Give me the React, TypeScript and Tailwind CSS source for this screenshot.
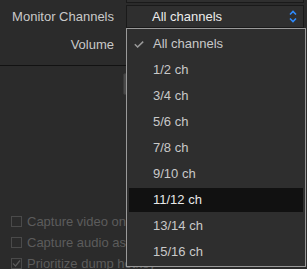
const items = ['All channels', '1/2 ch', '3/4 ch', '5/6 ch', '7/8 ch', '9/10 ch', '11/12 ch', '13/14 ch', '15/16 ch']

function Check({ checked }: { checked?: boolean }) {
  return (
    <span className="w-[11px] h-[11px] border border-[#4a4a4a] flex items-center justify-center shrink-0">
      {checked && (
        <svg width="9" height="9" viewBox="0 0 9 9">
          <path d="M1 4.5 L3.5 7 L8 1.5" stroke="#5a5a5a" strokeWidth="1.2" fill="none" />
        </svg>
      )}
    </span>
  )
}

export default function App() {
  return (
    <div
      className="relative w-[307px] h-[269px] overflow-hidden bg-[#2b2b2b] text-[13px] text-[#c9c9c9]"
      style={{ fontFamily: '"Liberation Sans", Arial, sans-serif' }}
    >
      <div className="flex flex-col h-[66px] border-b border-[#121212] w-[126px]">
        <div className="h-[6px]" />
        <div className="h-[22px] flex items-center justify-end pr-[12px]">Monitor Channels</div>
        <div className="h-[32px] flex items-center justify-end pr-[12px] pt-[2px]">Volume</div>
      </div>

      {/* previous combo bottom edge */}
      <div className="absolute left-[126px] top-[-10px] w-[178px] h-[13px] border border-[#1a1a1a] bg-[#2f2f2f]" />

      {/* combo */}
      <div className="absolute left-[126px] top-[5px] w-[178px] h-[23px] border border-[#1a1a1a] bg-[#2f2f2f] flex items-center pl-[25px] text-[#ececec]">
        All channels
        <svg className="absolute left-[162px] top-[4px]" width="8" height="13" viewBox="0 0 8 13">
          <path d="M1 4.5 L4 1.5 L7 4.5 M1 8.5 L4 11.5 L7 8.5" stroke="#2f8cff" strokeWidth="1.6" fill="none" />
        </svg>
      </div>

      {/* slider handle */}
      <div className="absolute left-[123px] top-[73px] w-[6px] h-[22px] rounded-[2px] bg-[#4a4a4a] border border-[#3a3a3a]" />

      {/* checkboxes */}
      <div className="absolute left-[11px] top-[214px] flex flex-col gap-[6px] text-[#5c5c5c] text-[13px]">
        <div className="flex items-center gap-[5px] h-[15px] whitespace-nowrap"><Check />Capture video on dump</div>
        <div className="flex items-center gap-[5px] h-[15px] whitespace-nowrap"><Check />Capture audio as well</div>
        <div className="flex items-center gap-[5px] h-[15px] whitespace-nowrap"><Check checked />Prioritize dump hotkey</div>
      </div>

      {/* dropdown */}
      <div className="absolute left-[126px] top-[28px] w-[180px] h-[239px] border border-[#9a9a9a] bg-[#2e2e2e] px-[2px] pt-[3px] flex flex-col gap-[2px]">
        {items.map((it, i) => (
          <div
            key={it}
            className={`relative h-[24px] shrink-0 flex items-center pl-[24px] ${i === 6 ? 'bg-[#111111] text-[#e8e8e8]' : 'text-[#c9c9c9]'}`}
          >
            {i === 0 && (
              <svg className="absolute left-[5px] top-[9px]" width="10" height="7" viewBox="0 0 10 7">
                <path d="M0.8 3.3 L3.6 6 L9.2 0.6" stroke="#9a9a9a" strokeWidth="1.5" fill="none" />
              </svg>
            )}
            {it}
          </div>
        ))}
      </div>
    </div>
  )
}
